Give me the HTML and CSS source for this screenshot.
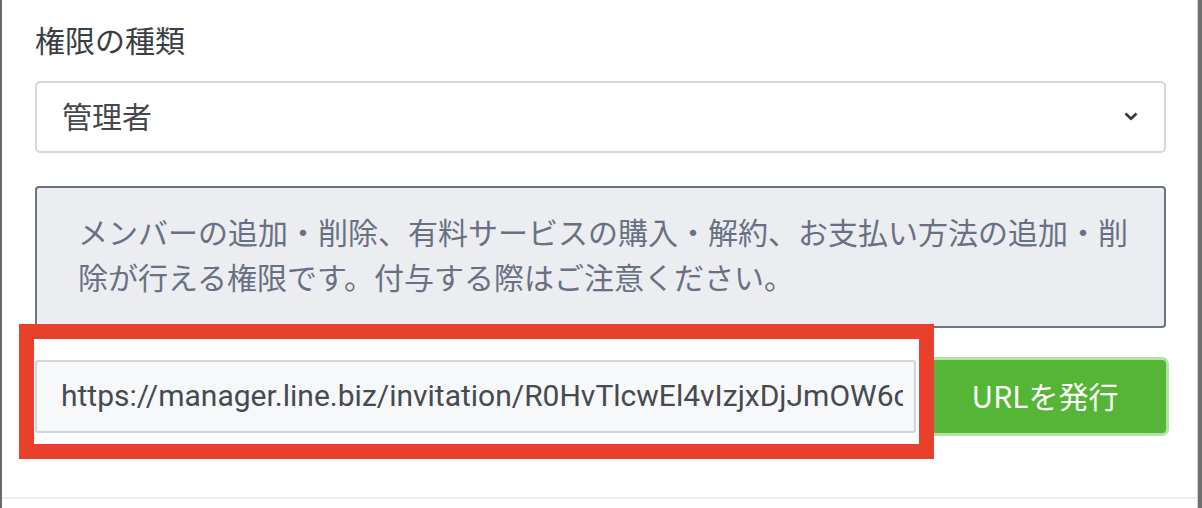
FILE: index.html
```html
<!DOCTYPE html>
<html lang="ja">
<head>
<meta charset="utf-8">
<title>権限の種類</title>
<link rel="stylesheet" href="styles.css">
</head>
<body>
<div class="frame">
  <div class="panel">
    <div class="panel-body">
      <div class="field-label">権限の種類</div>
      <div class="select">
        <span class="select-value">管理者</span>
        <svg class="chevron" width="14" height="9" viewBox="0 0 14 9"><path d="M1.5 1.5 L7 6.8 L12.5 1.5" fill="none" stroke="#33363b" stroke-width="2.6"/></svg>
      </div>
      <div class="notice">メンバーの追加・削除、有料サービスの購入・解約、お支払い方法の追加・削除が行える権限です。付与する際はご注意ください。</div>
      <div class="url-row">
        <div class="url-wrap">
          <div class="url-input"><span class="url-text">https://manager.line.biz/invitation/R0HvTlcwEl4vIzjxDjJmOW6cQp</span></div>
          <div class="highlight"></div>
        </div>
        <button class="issue-btn">URLを発行</button>
      </div>
    </div>
    <div class="panel-footer"></div>
  </div>
  <div class="edge"></div>
</div>
</body>
</html>
```

FILE: styles.css
```css
html, body {
  margin: 0;
  padding: 0;
  background: #ffffff;
}

body {
  font-family: "Noto Sans CJK JP", "Noto Sans", sans-serif;
  width: 1202px;
  height: 508px;
  overflow: hidden;
}

.frame {
  display: flex;
  height: 508px;
}

.panel {
  width: 1195px;
  border-left: 2px solid #6a6a6a;
  border-right: 1px solid #d6d6d6;
  display: flex;
  flex-direction: column;
}

.edge {
  width: 4px;
  background: #6e6e6e;
}

.panel-body {
  padding: 17px 31px 0 33px;
  height: 497px;
  box-sizing: border-box;
  flex-shrink: 0;
}

.panel-footer {
  border-top: 2px solid #eeeeee;
}

.field-label {
  font-size: 30px;
  line-height: 44px;
  color: #3b3e43;
}

.select {
  margin-top: 20px;
  height: 72px;
  box-sizing: border-box;
  border: 2px solid #d5d8dc;
  border-radius: 5px;
  display: flex;
  align-items: center;
  justify-content: space-between;
  padding: 0 26px 4px 25px;
}

.select-value {
  font-size: 30px;
  color: #45484d;
}

.chevron {
  display: block;
  margin-top: 2px;
}

.notice {
  margin-top: 33px;
  background: #ebedf0;
  border: 2px solid #6b7386;
  border-radius: 4px;
  padding: 21px 28px 27px 41px;
  font-size: 30px;
  line-height: 45px;
  color: #6a7083;
}

.url-row {
  margin-top: 32px;
  display: flex;
  gap: 8px;
}

.url-wrap {
  position: relative;
  flex: 1;
  min-width: 0;
}

.url-input {
  height: 73px;
  box-sizing: border-box;
  border: 2px solid #d2d4d8;
  border-radius: 3px;
  background: #f7f8fa;
  padding: 0 11px 0 24px;
  font-family: Roboto, "Noto Sans", sans-serif;
  font-size: 30px;
  line-height: 67px;
  color: #464a51;
}

.url-text {
  display: block;
  white-space: nowrap;
  overflow: hidden;
}

.highlight {
  position: absolute;
  left: -16px;
  top: -36px;
  width: 915px;
  height: 135px;
  box-sizing: border-box;
  border: 15px solid #e8402a;
}

.issue-btn {
  width: 242px;
  height: 73px;
  border: none;
  border-radius: 4px;
  background: #55b536;
  box-shadow: 0 0 0 3px #b3e2a3;
  color: #ffffff;
  font-family: "Noto Sans CJK JP", "Noto Sans", sans-serif;
  font-size: 30px;
  padding: 0 0 4px 0;
}
```
